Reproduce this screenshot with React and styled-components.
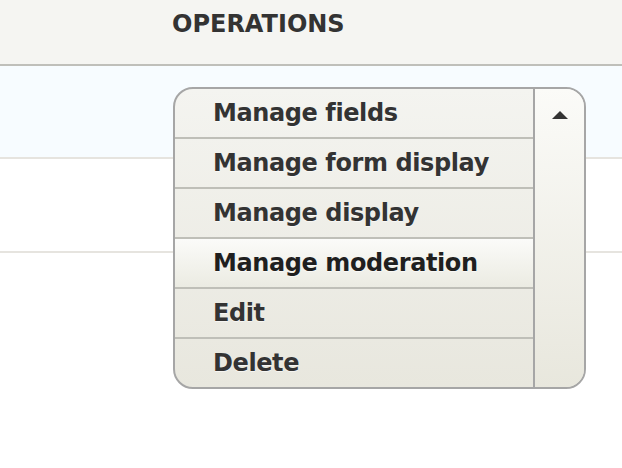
import React from 'react';
import styled, { createGlobalStyle } from 'styled-components';

const GlobalStyle = createGlobalStyle`
  html, body, #root {
    margin: 0;
    padding: 0;
    background: #fff;
    min-height: 100%;
  }
  body {
    font-family: "DejaVu Sans", "Liberation Sans", sans-serif;
    color: #333;
  }
`;

const Table = styled.div`
  width: 622px;
  height: 468px;
  position: relative;
`;

const HeadRow = styled.div`
  display: grid;
  grid-template-columns: 172px 1fr;
  height: 64px;
  background: #f5f5f2;
  border-bottom: 2px solid #bfbfba;
`;

const HeadCell = styled.div`
  padding-top: 10px;
  font-size: 24px;
  line-height: 28px;
  font-weight: bold;
  text-transform: uppercase;
  color: #333;
`;

const Row = styled.div`
  display: grid;
  grid-template-columns: 173px 1fr;
  height: ${p => p.h}px;
  background: ${p => (p.selected ? '#f7fcff' : '#fff')};
  border-bottom: 2px solid #e6e4df;
`;

const Cell = styled.div`
  position: relative;
`;

const Dropbutton = styled.div`
  position: absolute;
  top: 21px;
  left: 0;
  width: 413px;
  display: flex;
  box-sizing: border-box;
  border: 2px solid #a6a6a6;
  border-radius: 20px;
  overflow: hidden;
  background: linear-gradient(to bottom, #f4f4f0 0%, #e8e7de 100%);
  z-index: 2;
`;

const Items = styled.ul`
  flex: 1;
  margin: 0;
  padding: 0;
  list-style: none;
`;

const Item = styled.li`
  height: 48px;
  display: flex;
  align-items: center;
  padding-left: 38px;
  border-top: ${p => (p.first ? 'none' : '2px solid #bfbfb8')};
  font-size: 24px;
  letter-spacing: -0.4px;
  font-weight: bold;
  color: ${p => (p.hover ? '#1f1f1f' : '#333')};
  text-shadow: 0 1px rgba(255, 255, 255, 0.6);
  background: ${p =>
    p.hover ? 'linear-gradient(to bottom, #fbfbf9 0%, #ebebe2 100%)' : 'transparent'};
`;

const Toggle = styled.div`
  width: 49px;
  border-left: 2px solid #a6a6a6;
  background: linear-gradient(to bottom, #fbfbf8 0%, #e8e7dd 100%);
  display: flex;
  justify-content: center;
  padding-top: 22px;
`;

const Arrow = styled.span`
  display: block;
  width: 0;
  height: 0;
  border-left: 8px solid transparent;
  border-right: 8px solid transparent;
  border-bottom: 8px solid #333;
`;

const links = [
  'Manage fields',
  'Manage form display',
  'Manage display',
  'Manage moderation',
  'Edit',
  'Delete',
];

export default function App() {
  return (
    <>
      <GlobalStyle />
      <Table>
        <HeadRow>
          <div />
          <HeadCell>Operations</HeadCell>
        </HeadRow>
        <Row selected h={91}>
          <div />
          <Cell>
            <Dropbutton>
              <Items>
                {links.map((l, i) => (
                  <Item key={l} first={i === 0} hover={l === 'Manage moderation'}>
                    {l}
                  </Item>
                ))}
              </Items>
              <Toggle>
                <Arrow />
              </Toggle>
            </Dropbutton>
          </Cell>
        </Row>
        <Row h={92}>
          <div />
          <Cell />
        </Row>
      </Table>
    </>
  );
}
